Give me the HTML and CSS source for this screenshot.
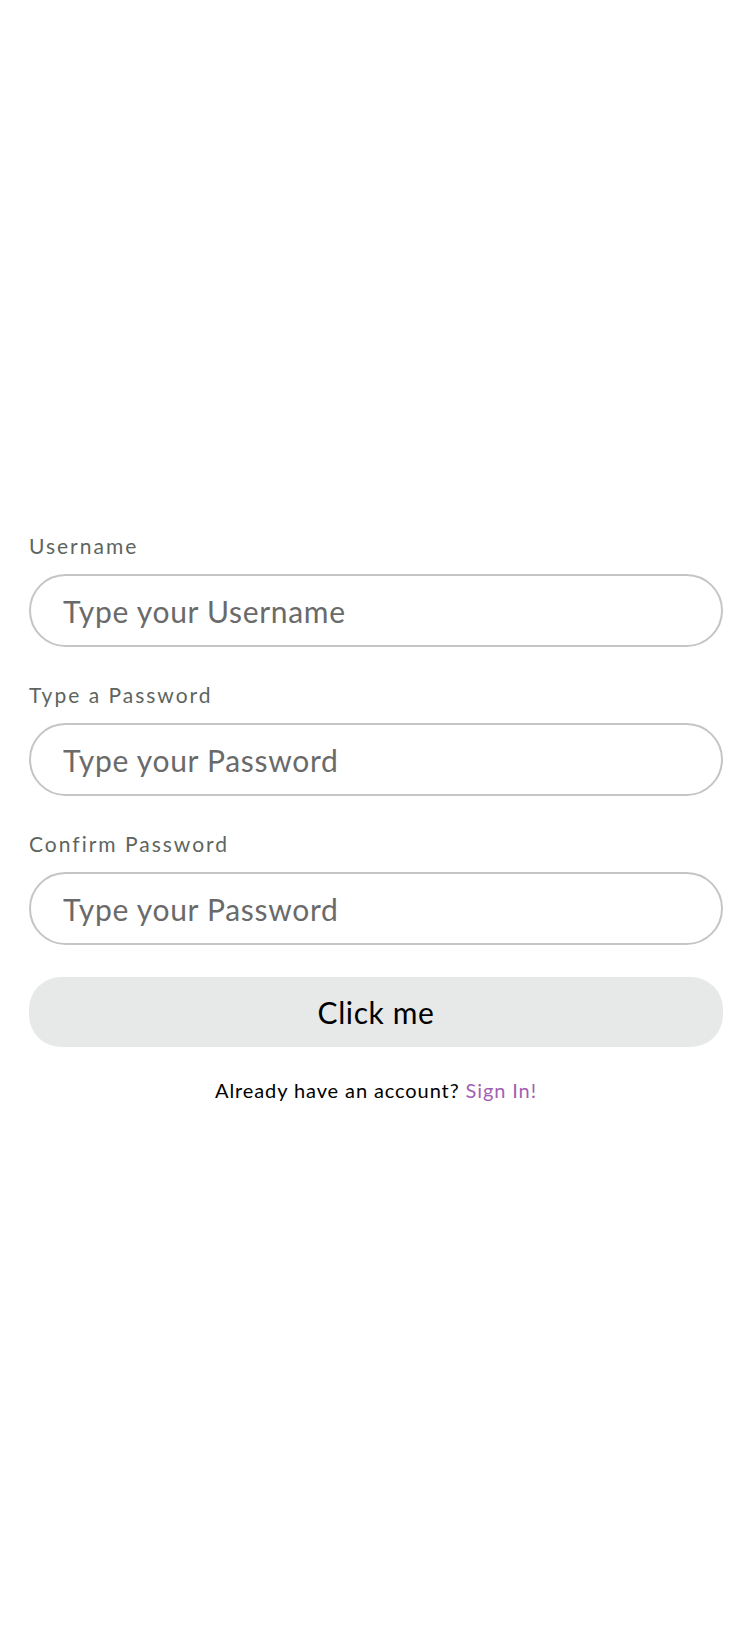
FILE: index.html
```html
<!DOCTYPE html>
<html lang="en">
<head>
<meta charset="utf-8">
<title>Sign Up</title>
<link rel="stylesheet" href="styles.css">
</head>
<body>
<main class="page">
  <form class="form">
    <div class="field">
      <label class="label" for="username">Username</label>
      <input class="input" id="username" type="text" placeholder="Type your Username">
    </div>
    <div class="field">
      <label class="label" for="password">Type a Password</label>
      <input class="input" id="password" type="password" placeholder="Type your Password">
    </div>
    <div class="field">
      <label class="label" for="confirm">Confirm Password</label>
      <input class="input" id="confirm" type="password" placeholder="Type your Password">
    </div>
    <button class="button" type="button">Click me</button>
    <p class="footer">Already have an account? <a class="link" href="#">Sign In!</a></p>
  </form>
</main>
</body>
</html>
```
FILE: styles.css
```css
* { box-sizing: border-box; }
html, body {
  margin: 0;
  padding: 0;
  background: #ffffff;
}
body {
  font-family: "Lato", "Noto Sans", sans-serif;
  width: 752px;
  min-height: 1626px;
}
.page {
  padding: 534px 29px 0;
}
.form {
  display: flex;
  flex-direction: column;
}
.field {
  display: flex;
  flex-direction: column;
  margin-bottom: 36px;
}
.field:nth-of-type(3) { margin-bottom: 32px; }
.label {
  font-size: 21px;
  line-height: 24px;
  letter-spacing: 2px;
  color: #5d6560;
  margin-bottom: 16px;
}
.input {
  height: 73px;
  width: 100%;
  border: 2px solid #c3c6c5;
  border-radius: 37px;
  padding: 0 0 0 32px;
  font-family: inherit;
  font-size: 30px;
  letter-spacing: 0.7px;
  color: #333;
  background: #fff;
  outline: none;
}
.input::placeholder {
  color: #6a6a6a;
  opacity: 1;
}
.button {
  height: 70px;
  width: 100%;
  border: none;
  border-radius: 32px;
  background: #e6e9e8;
  font-family: inherit;
  font-size: 30px;
  letter-spacing: 0.6px;
  color: #000;
  cursor: pointer;
}
.footer {
  margin: 31px 0 0;
  text-align: center;
  font-size: 20px;
  line-height: 24px;
  letter-spacing: 0.9px;
  color: #000;
}
.link {
  color: #a35fb5;
  text-decoration: none;
}
```
